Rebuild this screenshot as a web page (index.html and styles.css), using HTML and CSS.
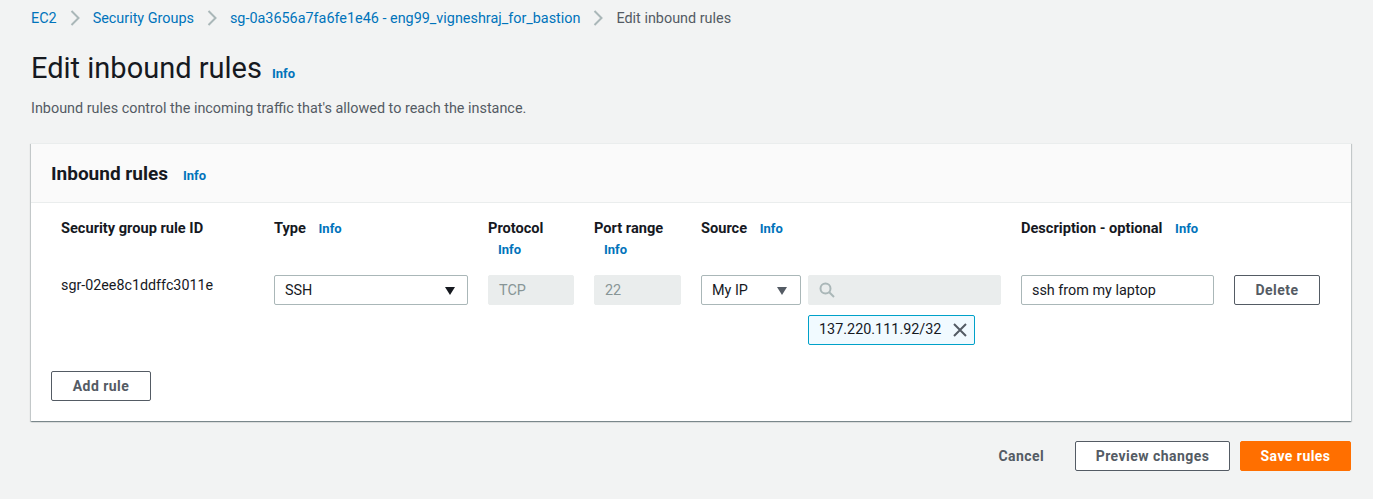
FILE: index.html
```html
<!DOCTYPE html>
<html>
<head>
  <title>Edit inbound rules | EC2</title>
  <link rel="stylesheet" href="styles.css">
</head>
<body>
  <nav class="crumbs">
    <a href="#">EC2</a>
    <svg class="crumb-sep" width="10" height="16"><path d="M1.5 1l7 7-7 7" fill="none" stroke="#aab7b8" stroke-width="2"/></svg>
    <a href="#">Security Groups</a>
    <svg class="crumb-sep" width="10" height="16"><path d="M1.5 1l7 7-7 7" fill="none" stroke="#aab7b8" stroke-width="2"/></svg>
    <a href="#">sg-0a3656a7fa6fe1e46 - eng99_vigneshraj_for_bastion</a>
    <svg class="crumb-sep" width="10" height="16"><path d="M1.5 1l7 7-7 7" fill="none" stroke="#aab7b8" stroke-width="2"/></svg>
    <span class="crumb-current">Edit inbound rules</span>
  </nav>

  <div class="page-title">
    <h1>Edit inbound rules</h1>
    <a class="info" href="#">Info</a>
  </div>
  <p class="page-desc">Inbound rules control the incoming traffic that's allowed to reach the instance.</p>

  <section class="card">
    <header class="card-head">
      <h2>Inbound rules</h2>
      <a class="info" href="#">Info</a>
    </header>
    <div class="card-body">
      <div class="rules">
        <div class="th">Security group rule ID</div>
        <div class="th">Type <a class="info" href="#">Info</a></div>
        <div class="th stacked">Protocol <a class="info" href="#">Info</a></div>
        <div class="th stacked">Port range <a class="info" href="#">Info</a></div>
        <div class="th">Source <a class="info" href="#">Info</a></div>
        <div class="th">Description - optional <a class="info" href="#">Info</a></div>
        <div></div>

        <div class="rule-id">sgr-02ee8c1ddffc3011e</div>
        <div class="field select">SSH <span class="caret dark"></span></div>
        <div class="field disabled">TCP</div>
        <div class="field disabled">22</div>
        <div class="source">
          <div class="source-inputs">
            <div class="field select my-ip">My IP <span class="caret"></span></div>
            <div class="field disabled search">
              <svg width="16" height="16" viewBox="0 0 16 16"><circle cx="6.5" cy="6.5" r="5" fill="none" stroke="#aab7b8" stroke-width="2"/><path d="M10 10l5 5" stroke="#aab7b8" stroke-width="2"/></svg>
            </div>
          </div>
          <div class="token">
            137.220.111.92/32
            <svg width="14" height="14" viewBox="0 0 14 14"><path d="M1 1l12 12M13 1L1 13" stroke="#545b64" stroke-width="2"/></svg>
          </div>
        </div>
        <div class="field">ssh from my laptop</div>
        <button class="btn">Delete</button>
      </div>
      <button class="btn add-rule">Add rule</button>
    </div>
  </section>

  <footer class="actions">
    <a class="cancel" href="#">Cancel</a>
    <button class="btn preview">Preview changes</button>
    <button class="btn primary">Save rules</button>
  </footer>
</body>
</html>
```

FILE: styles.css
```css
body {
  margin: 0;
  height: 499px;
  overflow: hidden;
  padding: 0 22px 0 31px;
  background: #f2f3f3;
  color: #16191f;
  font: 14px/20px Roboto, "Liberation Sans", sans-serif;
}
a {color: #0073bb; text-decoration: none;}

.crumbs {
  display: flex;
  align-items: center;
  height: 20px;
  padding-top: 9px;
  font-size: 14.4px;
}
.crumb-sep {margin: -2px 13px 0 13px;}
.crumb-current {color: #545b64;}

.page-title {
  display: flex;
  align-items: baseline;
  gap: 10px;
  margin-top: 10px;
}
h1 {
  margin: 0;
  font-size: 29px;
  line-height: 58px;
  font-weight: 400;
}
.info {
  font-size: 13px;
  font-weight: 700;
}
.page-desc {
  margin: 0;
  height: 44px;
  padding-top: 2px;
  color: #545b64;
  font-size: 14.4px;
}

.card {
  height: 278px;
  box-sizing: border-box;
  background: #fff;
  border-top: 1px solid #eaeded;
  box-shadow: 0 1px 1px 0 rgba(0, 28, 36, .3), 1px 1px 1px 0 rgba(0, 28, 36, .15), -1px 1px 1px 0 rgba(0, 28, 36, .15);
}
.card-head {
  display: flex;
  align-items: baseline;
  gap: 15px;
  height: 59px;
  box-sizing: border-box;
  padding: 19px 20px 0;
  background: #fafafa;
  border-bottom: 1px solid #eaeded;
}
h2 {
  margin: 0;
  font-size: 19px;
  line-height: 22px;
  font-weight: 700;
}
.card-body {padding: 15px 20px 0;}

.rules {
  display: grid;
  grid-template-columns: 193px 194px 86px 87px 300px 193px 86px;
  column-gap: 20px;
  grid-template-rows: 57px auto;
  padding-left: 10px;
  height: 153px;
}
.th {font-weight: 700; font-size: 14.6px;}
.th .info {margin-left: 9px;}
.stacked .info {display: block; margin: 2px 0 0 10px; line-height: 20px;}

.rule-id {font-size: 14.3px;}
.field {
  height: 30px;
  box-sizing: border-box;
  padding: 1px 10px 0;
  display: flex;
  align-items: center;
  background: #fff;
  border: 1px solid #aab7b8;
  border-radius: 2px;
  font-size: 14.4px;
}
.select {justify-content: space-between;}
.my-ip {width: 100px; flex: none;}
.disabled {
  background: #eaeded;
  border-color: #eaeded;
  color: #879596;
}
.search {flex: 1; padding-top: 0;}
.caret {
  width: 0;
  height: 0;
  margin-right: 2px;
  border-left: 5.5px solid transparent;
  border-right: 5.5px solid transparent;
  border-top: 8px solid #545b64;
}
.caret.dark {border-top-color: #16191f;}
.my-ip .caret {margin-right: 3px;}

.source-inputs {display: flex; gap: 7px;}
.token {
  display: flex;
  align-items: center;
  justify-content: space-between;
  width: 167px;
  height: 30px;
  box-sizing: border-box;
  margin: 10px 0 0 107px;
  padding: 0 7px 0 10px;
  background: #f1faff;
  border: 1px solid #00a1c9;
  border-radius: 2px;
  font-size: 14.4px;
}

.btn {
  height: 30px;
  box-sizing: border-box;
  padding: 0;
  background: #fff;
  border: 1px solid #545b64;
  border-radius: 2px;
  color: #545b64;
  font: 700 14px/20px Roboto, "Liberation Sans", sans-serif;
  letter-spacing: .45px;
}
.add-rule {width: 100px; display: block;}

.actions {
  display: flex;
  align-items: center;
  justify-content: flex-end;
  margin-top: 20px;
}
.cancel {
  margin-right: 31px;
  color: #545b64;
  font-weight: 700;
  font-size: 14px;
  letter-spacing: .4px;
}
.preview {width: 155px; margin-right: 10px;}
.primary {
  width: 111px;
  background: #ff6f00;
  border-color: #ff6f00;
  color: #fff;
}
```
